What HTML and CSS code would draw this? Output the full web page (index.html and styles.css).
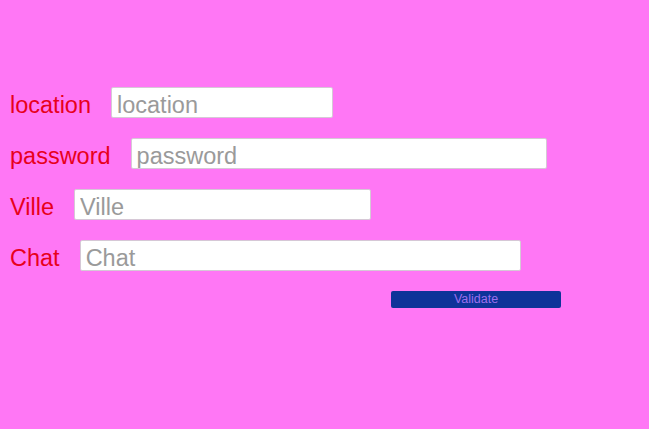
FILE: index.html
```html
<!DOCTYPE html>
<html>
<head>
<meta charset="utf-8">
<link rel="stylesheet" href="styles.css">
</head>
<body>
<form class="form">
  <div class="row"><label class="label">location</label><input class="field w-location" placeholder="location"></div>
  <div class="row"><label class="label">password</label><input class="field w-password" placeholder="password"></div>
  <div class="row"><label class="label">Ville</label><input class="field w-ville" placeholder="Ville"></div>
  <div class="row"><label class="label">Chat</label><input class="field w-chat" placeholder="Chat"></div>
  <div class="actions"><button type="button" class="btn">Validate</button></div>
</form>
</body>
</html>
```
FILE: styles.css
```css
html, body {
  margin: 0;
  background: #ff77f5;
  height: 100%;
}
body {
  font-family: "Liberation Sans", Arial, sans-serif;
}
.form {
  padding: 87px 0 0 10px;
  display: flex;
  flex-direction: column;
  gap: 20px;
}
.row {
  display: flex;
  align-items: baseline;
  gap: 20px;
  height: 31px;
}
.label {
  color: #e8001c;
  font-size: 23.5px;
  line-height: 23px;
}
.field {
  box-sizing: border-box;
  height: 31px;
  margin: 0;
  border: 1px solid #d6c8d6;
  border-radius: 2px;
  background: #fff;
  font-family: "Liberation Sans", Arial, sans-serif;
  font-size: 23.5px;
  line-height: 23px;
  padding: 6px 4px 0 5px;
  color: #333;
}
.field::placeholder { color: #9a9a9a; }
.w-location { width: 222px; }
.w-password { width: 416px; }
.w-ville { width: 297px; }
.w-chat { width: 441px; }
.actions {
  display: flex;
  padding-left: 381px;
}
.btn {
  box-sizing: border-box;
  width: 170px;
  height: 17px;
  margin: 0;
  padding: 0;
  border: none;
  border-radius: 2px;
  background: #0e3399;
  color: #9d6fec;
  font-family: "Liberation Sans", Arial, sans-serif;
  font-size: 12.5px;
  line-height: 17px;
}
```
